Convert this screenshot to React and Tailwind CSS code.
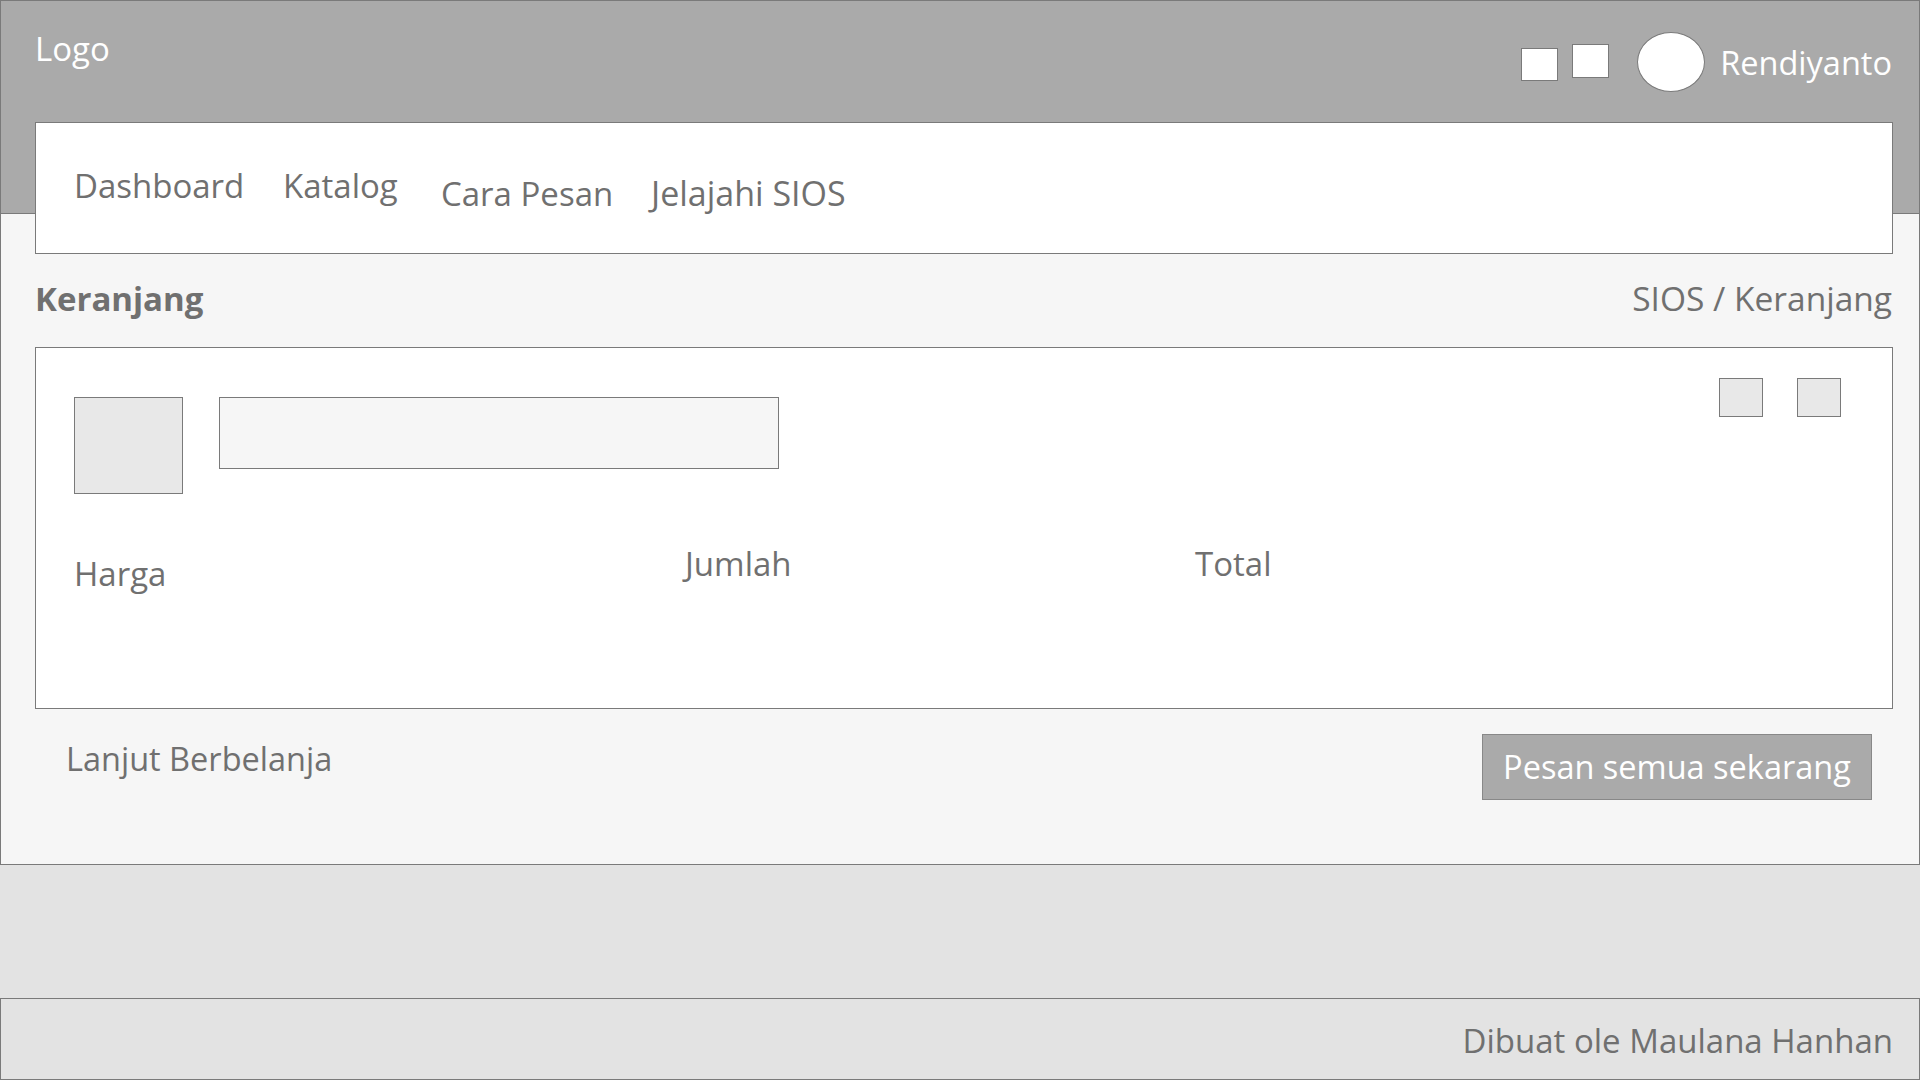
import React from 'react'

const navItems = [
  { label: 'Dashboard', w: 'w-[209px]', cls: 'mt-0 text-[33px]' },
  { label: 'Katalog', w: 'w-[158px]', cls: 'mt-0 text-[33px]' },
  { label: 'Cara Pesan', w: 'w-[210px]', cls: 'mt-[8px] text-[33px]' },
  { label: 'Jelajahi SIOS', w: 'w-auto', cls: 'mt-[7px] text-[34px]' },
]

function Header() {
  return (
    <div className="h-[213px] bg-[#aaaaaa] border-b border-[#7a7a7a] flex justify-between pl-[34px] pr-[27px]">
      <div className="mt-[31px] text-[33px] leading-none text-white">Logo</div>
      <div className="flex items-start pt-[31px]">
        <div className="mt-[16px] w-[37px] h-[33px] bg-white border border-[#7a7a7a]" />
        <div className="mt-[12px] ml-[14px] w-[37px] h-[34px] bg-white border border-[#7a7a7a]" />
        <div className="ml-[28px] w-[68px] h-[60px] bg-white border border-[#7a7a7a] rounded-[50%]" />
        <div className="mt-[15px] ml-[15px] text-[32.5px] leading-none text-white">Rendiyanto</div>
      </div>
    </div>
  )
}

function NavBar() {
  return (
    <div className="relative z-10 -mt-[92px] ml-[34px] mr-[26px] h-[132px] bg-white border border-[#7a7a7a] flex items-start pl-[38px] pt-[46px]">
      {navItems.map((item) => (
        <div key={item.label} className={`${item.w} ${item.cls} shrink-0 leading-none`}>
          {item.label}
        </div>
      ))}
    </div>
  )
}

function CartCard() {
  return (
    <div className="mt-[32px] ml-[34px] mr-[26px] h-[362px] bg-white border border-[#7a7a7a] pt-[30px] pl-[38px] pr-[51px]">
      <div className="flex justify-between items-start">
        <div className="flex items-start mt-[19px]">
          <div className="w-[109px] h-[97px] bg-[#e8e8e8] border border-[#7a7a7a]" />
          <div className="ml-[36px] w-[560px] h-[72px] bg-[#f6f6f6] border border-[#7a7a7a]" />
        </div>
        <div className="flex gap-[34px]">
          <div className="w-[44px] h-[39px] bg-[#e8e8e8] border border-[#7a7a7a]" />
          <div className="w-[44px] h-[39px] bg-[#e8e8e8] border border-[#7a7a7a]" />
        </div>
      </div>
      <div className="flex items-start mt-[53px]">
        <div className="w-[611px] mt-[10px] text-[33px] leading-none">Harga</div>
        <div className="w-[510px] text-[33px] leading-none">Jumlah</div>
        <div className="text-[33px] leading-none">Total</div>
      </div>
    </div>
  )
}

export default function App() {
  return (
    <div className="w-[1920px] h-[1080px] bg-[#e3e3e3] text-[#707070] font-['Open_Sans',sans-serif] flex flex-col">
      <div className="h-[865px] bg-[#f6f6f6] border border-[#7a7a7a] flex flex-col">
        <Header />
        <NavBar />
        <div className="mt-[28px] ml-[34px] mr-[27px] h-[33px] flex justify-between items-start">
          <div className="text-[33px] leading-none font-bold">Keranjang</div>
          <div className="text-[33.5px] leading-none">SIOS / Keranjang</div>
        </div>
        <CartCard />
        <div className="mt-[25px] ml-[65px] mr-[47px] flex justify-between items-start">
          <div className="mt-[9px] text-[32.5px] leading-none">Lanjut Berbelanja</div>
          <button className="w-[390px] h-[66px] bg-[#aaaaaa] border border-[#888888] text-white text-[32.5px] leading-none flex items-center justify-center">
            Pesan semua sekarang
          </button>
        </div>
      </div>
      <div className="mt-[133px] h-[82px] border border-[#7a7a7a] bg-[#e3e3e3] flex justify-end items-start pt-[25px] pr-[26px]">
        <div className="text-[33px] leading-none">Dibuat ole Maulana Hanhan</div>
      </div>
    </div>
  )
}
